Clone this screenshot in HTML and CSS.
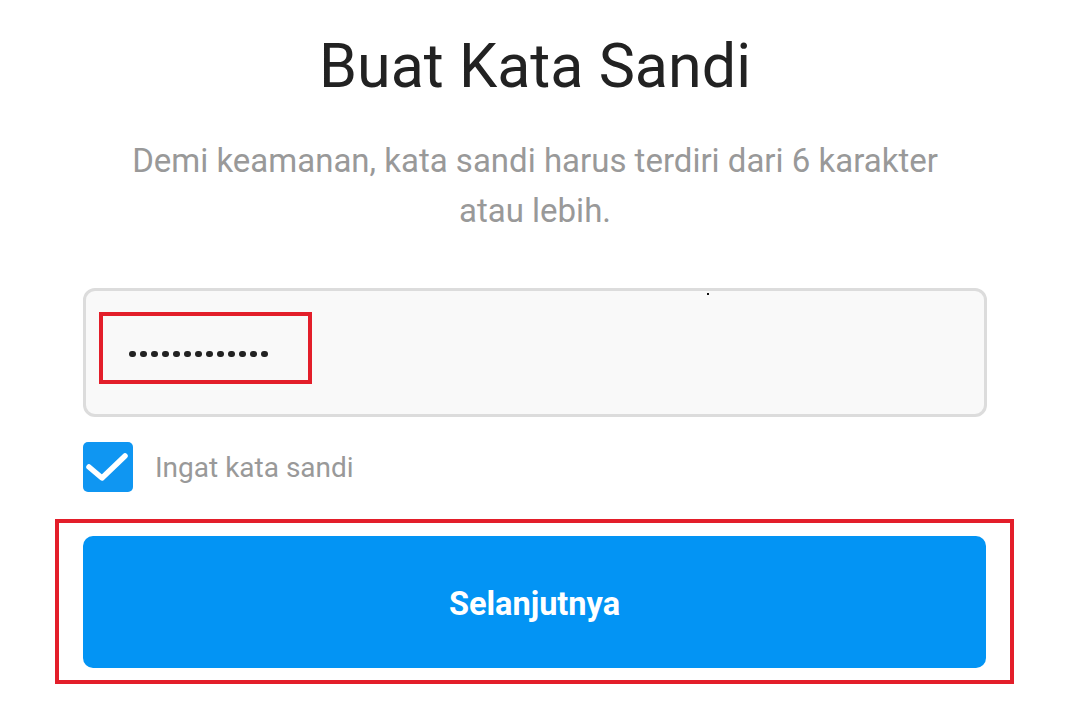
FILE: index.html
```html
<!DOCTYPE html>
<html lang="id">
<head>
    <meta charset="UTF-8">
    <meta name="viewport" content="width=device-width, initial-scale=1.0">
    <title>Buat Kata Sandi</title>
    <link rel="stylesheet" href="styles.css">
</head>
<body>
    <div class="page">
        <h1 class="title">Buat Kata Sandi</h1>

        <p class="subtitle">Demi keamanan, kata sandi harus terdiri dari 6 karakter<br>atau lebih.</p>

        <div class="password-box">
            <div class="highlight">
                <div class="dots">
                    <span></span><span></span><span></span><span></span><span></span>
                    <span></span><span></span><span></span><span></span><span></span>
                    <span></span><span></span><span></span>
                </div>
            </div>
            <span class="speck"></span>
        </div>

        <label class="remember">
            <span class="checkbox">
                <svg width="50" height="50" viewBox="0 0 50 50">
                    <path d="M6 25 L19 36 L42 14" fill="none" stroke="#fff" stroke-width="5.5" stroke-linecap="round" stroke-linejoin="round"/>
                </svg>
            </span>
            <span class="remember-text">Ingat kata sandi</span>
        </label>

        <div class="button-frame">
            <button type="button" class="next-btn">Selanjutnya</button>
        </div>
    </div>
</body>
</html>
```

FILE: styles.css
```css
body {
    margin: 0;
    background-color: #fff;
    font-family: Roboto, "Liberation Sans", sans-serif;
}
.page {
    padding: 0 88px 0 83px;
}
.title {
    margin: 29px 0 0;
    font-size: 61px;
    line-height: 74px;
    font-weight: 400;
    color: #222;
    text-align: center;
}
.subtitle {
    margin: 33px 0 0;
    font-size: 33px;
    line-height: 50px;
    color: #999;
    text-align: center;
}
.password-box {
    position: relative;
    box-sizing: border-box;
    height: 129px;
    margin-top: 52px;
    padding: 21px 0 0 13px;
    background-color: #f9f9f9;
    border: 3px solid #dcdcdc;
    border-radius: 12px;
}
.highlight {
    box-sizing: border-box;
    width: 213px;
    height: 72px;
    border: 4px solid #e31e2a;
    display: flex;
    align-items: center;
    padding: 12px 0 0 26px;
}
.dots {
    display: flex;
    gap: 4.5px;
}
.dots span {
    width: 6.5px;
    height: 6.5px;
    border-radius: 50%;
    background-color: #222;
}
.speck {
    position: absolute;
    left: 621px;
    top: 2px;
    width: 2px;
    height: 2px;
    background-color: #111;
}
.remember {
    display: flex;
    align-items: center;
    gap: 22px;
    margin-top: 25px;
}
.checkbox {
    width: 50px;
    height: 50px;
    border-radius: 5px;
    background-color: #0f96f2;
    display: flex;
}
.remember-text {
    font-size: 28px;
    color: #999;
}
.button-frame {
    margin: 27px -27px 0 -28px;
    padding: 13px 24px 12px;
    border: 4px solid #e31e2a;
}
.next-btn {
    display: block;
    width: 100%;
    height: 132px;
    padding-top: 4px;
    border: none;
    border-radius: 10px;
    background-color: #0394f4;
    color: #fff;
    font-family: Roboto, "Liberation Sans", sans-serif;
    font-size: 32.5px;
    font-weight: 700;
}
```
